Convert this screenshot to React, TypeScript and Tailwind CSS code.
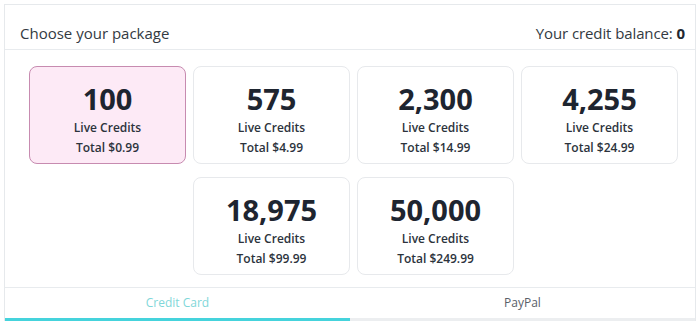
import React from "react";

const packages = [
  { n: "100", p: "$0.99", selected: true },
  { n: "575", p: "$4.99" },
  { n: "2,300", p: "$14.99" },
  { n: "4,255", p: "$24.99" },
  { n: "18,975", p: "$99.99" },
  { n: "50,000", p: "$249.99" },
];

export default function App() {
  return (
    <div
      className="w-[700px] h-[321px] bg-white pt-[4px] px-[4px] overflow-hidden"
      style={{ fontFamily: '"Open Sans", "Noto Sans", sans-serif' }}
    >
      <div className="border border-[#e6e9ec] border-b-0 h-[317px] flex flex-col">
        <div className="h-[45px] flex items-end justify-between pl-[15px] pr-[10px] pb-[5px] border-b border-[#e8ebee]">
          <span className="text-[15px] text-[#333a42]">Choose your package</span>
          <span className="text-[15px] tracking-[-0.1px] text-[#333a42]">
            Your credit balance: <b className="font-bold text-[#222831]">0</b>
          </span>
        </div>
        <div className="flex flex-wrap justify-center gap-x-[7px] gap-y-[13px] pl-[7px] pt-[16px] pb-[12px] border-b border-[#e8ebee]">
          {packages.map((pk) => (
            <div
              key={pk.n}
              className={
                "w-[157px] h-[98px] rounded-[8px] border flex flex-col items-center pt-[13px] " +
                (pk.selected
                  ? "bg-[#fdeaf6] border-[#c78bb0]"
                  : "bg-white border-[#e7e9ec]")
              }
            >
              <div className="text-[29px] leading-[38px] font-bold text-[#1e2530]">{pk.n}</div>
              <div className="text-[12px] leading-[16px] font-semibold text-[#2c333c] mt-[2px]">
                Live Credits
              </div>
              <div className="text-[12px] leading-[16px] font-semibold text-[#2c333c] mt-[4px]">
                Total {pk.p}
              </div>
            </div>
          ))}
        </div>
        <div className="flex flex-1">
          <div className="flex-1 flex items-center justify-center border-b-[3px] border-[#45d3dc] text-[12px] text-[#7fd7d9]">
            Credit Card
          </div>
          <div className="flex-1 flex items-center justify-center border-b-[3px] border-[#eceef0] text-[12px] text-[#5a6068]">
            PayPal
          </div>
        </div>
      </div>
    </div>
  );
}
